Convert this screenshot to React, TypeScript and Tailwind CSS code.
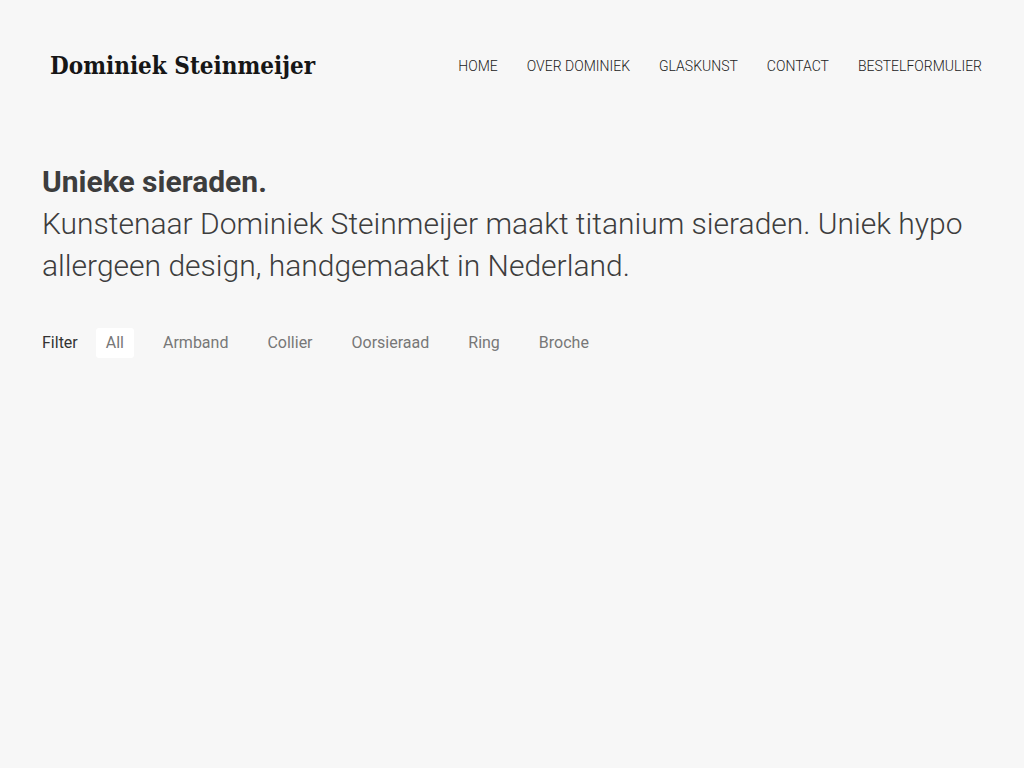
const navItems = ["HOME", "OVER DOMINIEK", "GLASKUNST", "CONTACT", "BESTELFORMULIER"];
const filters = ["All", "Armband", "Collier", "Oorsieraad", "Ring", "Broche"];

const App = () => {
  return (
    <div className="min-h-screen bg-[#f7f7f7] text-[#3d3d3d]" style={{ fontFamily: "Roboto, 'Liberation Sans', sans-serif" }}>
      <div className="px-[42px] pt-[44px]">
        <header className="flex items-center justify-between h-[44px]">
          <div
            className="pl-[8px] text-[24px] font-semibold font-stretch-condensed text-[#161616]"
            style={{ fontFamily: "'DejaVu Serif', 'Liberation Serif', serif" }}
          >
            Dominiek Steinmeijer
          </div>
          <nav className="flex items-center gap-[29px] text-[14px] font-light text-[#222]">
            {navItems.map((item) => (
              <a key={item} href="#" className="whitespace-nowrap">
                {item}
              </a>
            ))}
          </nav>
        </header>

        <section className="mt-[73px] text-[30px] leading-[42px]">
          <h1 className="font-bold text-[#3d3d3d]">Unieke sieraden.</h1>
          <p className="font-light text-[#3d3d3d]">
            Kunstenaar Dominiek Steinmeijer maakt titanium sieraden. Uniek hypo allergeen design, handgemaakt in
            Nederland.
          </p>
        </section>

        <div className="mt-[41px] flex items-center gap-[18px] text-[16px]">
          <span className="text-[#333]">Filter</span>
          <div className="flex items-center gap-[19px]">
            {filters.map((f, i) => (
              <button
                key={f}
                className={
                  i === 0
                    ? "h-[30px] px-[10px] rounded-[3px] bg-white text-[#777]"
                    : "h-[30px] px-[10px] rounded-[3px] text-[#777]"
                }
              >
                {f}
              </button>
            ))}
          </div>
        </div>
      </div>
    </div>
  );
};

export default App;
